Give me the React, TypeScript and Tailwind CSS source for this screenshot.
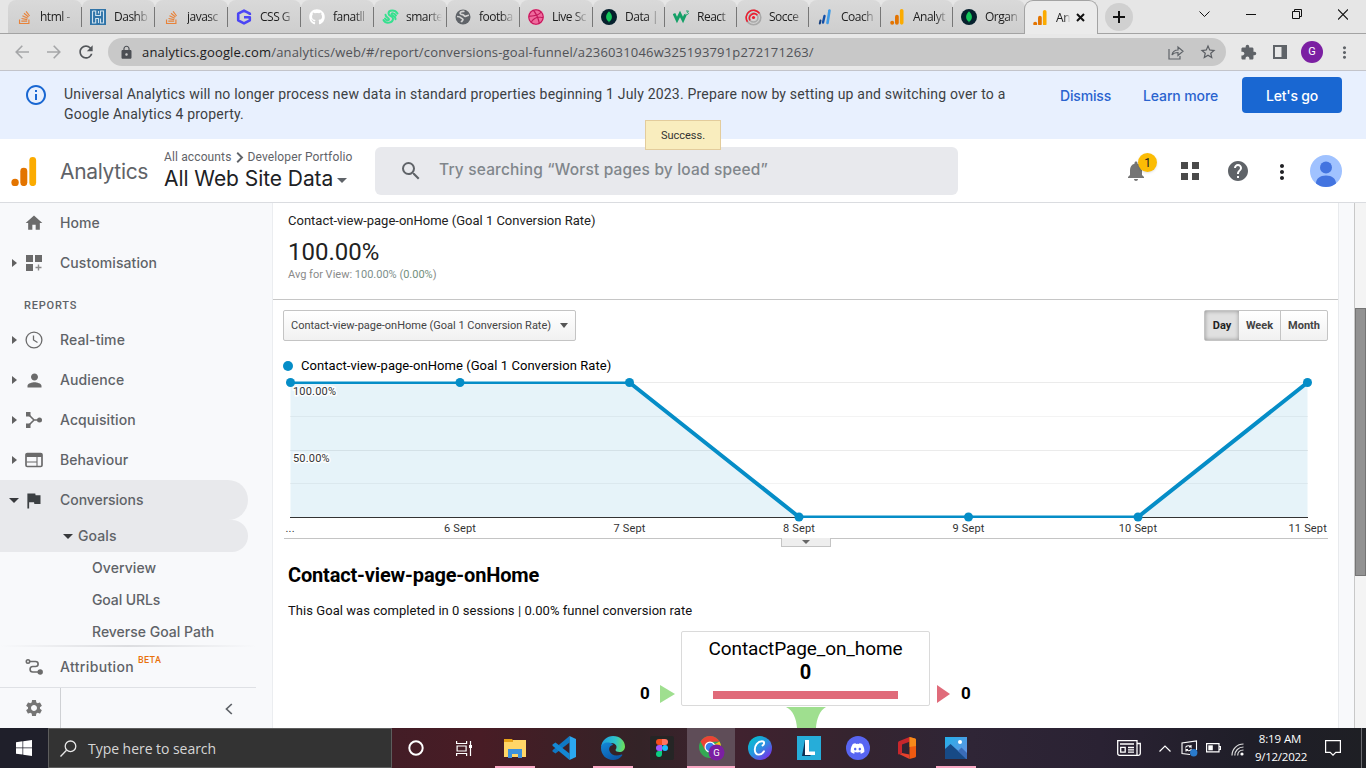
import React from 'react';
import {
  MdHome, MdPerson, MdSettings, MdHelp, MdSearch,
  MdMoreVert, MdLock, MdRefresh, MdExtension, MdOutlineInfo, MdStarBorder,
} from 'react-icons/md';
import { FaStackOverflow, FaGithub, FaDribbble, FaDiscord } from 'react-icons/fa';

/* ---------- favicons ---------- */

const StackIcon = () => <FaStackOverflow size={15} color="#e8833a" />;

const AnalyticsIcon = ({ size = 14 }: { size?: number }) => (
  <svg width={size} height={size * 1.12} viewBox="0 0 26 30">
    <rect x="18.5" y="0" width="7" height="30" rx="3.5" fill="#fbab00" />
    <rect x="9.2" y="11" width="7.2" height="19" rx="3.6" fill="#e37400" />
    <circle cx="3.8" cy="26.2" r="3.8" fill="#e37400" />
  </svg>
);

const HarvestIcon = () => (
  <svg width="16" height="16" viewBox="0 0 16 16">
    <rect width="16" height="16" fill="#3074a8" />
    <path d="M2.500 2v12h3.200V9.500h2.800V14M2.500 2h3.200v4.500h4.800V2h3v12h-3V9.500M8.500 2v2.500" fill="none" stroke="#d0e1ee" strokeWidth="1.100" />
  </svg>
);

const HexIcon = () => (
  <svg width="16" height="16" viewBox="0 0 16 16" fill="none" stroke="#4b45f5" strokeWidth="2.600" strokeLinejoin="round">
    <path d="M13.800 6V4.700L8 1.600 2.200 4.700v6.600L8 14.400l5.800-3.100V8.200H8" />
  </svg>
);

const SmartIcon = () => (
  <svg width="17" height="16" viewBox="0 0 17 16" fill="none" stroke="#35e08f" strokeWidth="2" strokeLinecap="round">
    <path d="M15.500 4.500C13 .5 6.500.8 6.500 4.500c0 3 4.500 2 4.500 5 0 4.500-7 6-9.500 1.500" />
    <path d="M14 6.500c-1.500-2.500-4.500-2.700-4.500-1.300 0 1.500 4.500 2 4 5M3 9.500c1.500 2.500 4 2 4 .8 0-1.300-3.500-2-3.500-4.500" />
  </svg>
);

const GlobeIcon = () => (
  <svg width="16" height="16" viewBox="0 0 16 16">
    <circle cx="8" cy="8" r="7.500" fill="#5f6368" />
    <path d="M9.500 2.200c-1.500.4-3.700 0-4.300 1.500-.4 1.300 1 1.900 2.300 1.900s1.400 1.700 2.800 1.700S12.600 6 14 6.300M2 7.500c1.400 0 3.200.2 3.900 1.300.7 1 1.900.6 2 1.900.1 1-1.200 1.300-1.600 2.500" fill="none" stroke="#d2d2d2" strokeWidth="1.700" />
  </svg>
);

const MongoIcon = () => (
  <svg width="16" height="16" viewBox="0 0 16 16">
    <circle cx="8" cy="8" r="8" fill="#06202d" />
    <path d="M8 2.200C5.600 4.800 5.100 6.300 5.100 8c0 2 1.200 3.500 2.500 4.500L8 14l.4-1.500C9.800 11.500 10.900 10 10.900 8c0-1.700-.5-3.200-2.900-5.800z" fill="#13c65a" />
  </svg>
);

const W3Icon = () => (
  <svg width="17" height="14" viewBox="0 0 17 14" fill="none" stroke="#14a067">
    <path d="M1 3.500l3 6.500 3-6 3 6 2.500-5.500" strokeWidth="2.800" />
    <path d="M13 1h2.500l-1.200 1.500c1.500 0 1.500 2-.2 2-.6 0-1-.2-1.300-.6" strokeWidth=".9" />
  </svg>
);

const RadarIcon = () => (
  <svg width="17" height="17" viewBox="0 0 17 17" fill="none" strokeWidth="1.600">
    <circle cx="8.500" cy="8.500" r="7.300" stroke="#a9a9a9" />
    <circle cx="8.500" cy="8.500" r="4.500" stroke="#a9a9a9" />
    <path d="M2.500 12.800A7.300 7.300 0 0 1 14.500 4.400M5 11.300A4.500 4.500 0 0 1 12.300 6.200" stroke="#ee1c2e" />
    <circle cx="8.500" cy="8.500" r="1.600" fill="#ee1c2e" stroke="none" />
  </svg>
);

const CoachIcon = () => (
  <svg width="14" height="17" viewBox="0 0 14 17" fill="none" strokeLinecap="round">
    <path d="M11.500 1.500L9.500 14" stroke="#3f9be6" strokeWidth="2.600" />
    <path d="M6.500 7L5 13.500" stroke="#1450a8" strokeWidth="2.400" />
    <path d="M2.500 11.500l-.7 3" stroke="#17407e" strokeWidth="2" />
  </svg>
);

/* ---------- browser chrome ---------- */

type TabInfo = { label: string; icon: React.ReactNode; w: string };

const tabs: TabInfo[] = [
  { label: 'html -', icon: <StackIcon />, w: 'w-[74px]' },
  { label: 'Dashb', icon: <HarvestIcon />, w: 'w-[73px]' },
  { label: 'javasc', icon: <StackIcon />, w: 'w-[73px]' },
  { label: 'CSS G', icon: <HexIcon />, w: 'w-[73px]' },
  { label: 'fanatll', icon: <FaGithub size={16} color="#fff" />, w: 'w-[73px]' },
  { label: 'smarte', icon: <SmartIcon />, w: 'w-[73px]' },
  { label: 'footba', icon: <GlobeIcon />, w: 'w-[73px]' },
  { label: 'Live Sc', icon: <FaDribbble size={16} color="#c2185b" className="rounded-full bg-[#f06a9d]" />, w: 'w-[73px]' },
  { label: 'Data |', icon: <MongoIcon />, w: 'w-[72px]' },
  { label: 'React', icon: <W3Icon />, w: 'w-[72px]' },
  { label: 'Socce', icon: <RadarIcon />, w: 'w-[72px]' },
  { label: 'Coach', icon: <CoachIcon />, w: 'w-[72px]' },
  { label: 'Analyt', icon: <AnalyticsIcon />, w: 'w-[72px]' },
  { label: 'Organ', icon: <MongoIcon />, w: 'w-[72px]' },
];

function TabStrip() {
  return (
    <div className="flex h-[34px] border-b border-[#a3a3a3] bg-[#e6e6e6] pl-[8px]">
      {tabs.map((t, i) => (
        <div key={i} className={`${t.w} flex h-[33px] shrink-0 items-center rounded-t-[8px] bg-linear-to-b from-[#d9d9d9] to-[#cecece] pt-[1px]`}>
          <span className="ml-[7px] flex w-[18px] shrink-0 justify-center">{t.icon}</span>
          <span className="ml-[7px] w-[36px] shrink-0 whitespace-nowrap text-[12px] leading-[18px] tracking-[-0.5px] text-[#1c1c1c] [mask-image:linear-gradient(to_right,black_60%,transparent_100%)]">{t.label}</span>
          {i < tabs.length - 1 && <span className="ml-auto h-[20px] w-px bg-[#777]" />}
        </div>
      ))}
      <div className="-ml-[1px] flex h-[34px] w-[74px] shrink-0 items-center rounded-t-[9px] border border-b-0 border-[#a3a3a3] bg-[#ebebeb]">
        <span className="ml-[6px] flex w-[18px] justify-center"><AnalyticsIcon /></span>
        <span className="ml-[7px] w-[16px] whitespace-nowrap text-[12px] tracking-[-0.4px] text-[#1c1c1c] [mask-image:linear-gradient(to_right,black_50%,transparent_90%)]">An</span>
        <svg className="ml-[4px]" width="9" height="9" viewBox="0 0 9 9"><path d="M1 1l7 7M8 1L1 8" stroke="#111" strokeWidth="2" /></svg>
      </div>
      <div className="ml-[7px] mt-[3px] flex h-[28px] w-[28px] items-center justify-center rounded-full bg-[#d0d0d0]">
        <svg width="12" height="12" viewBox="0 0 12 12"><path d="M6 0v12M0 6h12" stroke="#111" strokeWidth="2" /></svg>
      </div>
      <div className="ml-auto flex items-start pt-[8px]">
        <svg className="mr-[36px] mt-[3px]" width="11" height="7" viewBox="0 0 11 7"><path d="M.5.5l5 5 5-5" fill="none" stroke="#111" /></svg>
        <svg className="mr-[36px] mt-[6px]" width="10" height="1"><rect width="10" height="1" fill="#111" /></svg>
        <svg className="mr-[36px] mt-[1px]" width="10" height="10" viewBox="0 0 10 10" fill="none" stroke="#111"><path d="M.5 2.500h7v7h-7zM2.500 2.500v-2h7v7h-2" /></svg>
        <svg className="mr-[18px] mt-[1px]" width="10" height="11" viewBox="0 0 10 10"><path d="M0 0l10 10M10 0L0 10" stroke="#111" strokeWidth="1.100" /></svg>
      </div>
    </div>
  );
}

function Toolbar() {
  return (
    <div className="flex h-[37px] items-center border-b border-[#c3c4ca] bg-[#e8e8e8]">
      <svg className="ml-[15px]" width="14" height="14" viewBox="0 0 14 14" fill="none" stroke="#a5a6a8" strokeWidth="1.600"><path d="M14 7H1.500M7.300 .8L1.200 7l6.100 6.200" /></svg>
      <svg className="ml-[18px]" width="14" height="14" viewBox="0 0 14 14" fill="none" stroke="#a5a6a8" strokeWidth="1.600"><path d="M0 7h12.500M6.700 .8L12.800 7l-6.100 6.200" /></svg>
      <MdRefresh className="ml-[15px]" size={20} color="#53565a" />
      <div className="ml-[12px] flex h-[28px] w-[1118px] items-center rounded-full bg-[#c8c8c8]">
        <MdLock className="ml-[11px]" size={15} color="#4c4f54" />
        <span className="ml-[8px] whitespace-nowrap pt-px text-[13px] tracking-[0.17px] text-[#505257]">
          <span className="text-[#1b1b1c]">analytics.google.com</span>/analytics/web/#/report/conversions-goal-funnel/a236031046w325193791p272171263/
        </span>
        <svg className="ml-auto" width="16" height="15" viewBox="0 0 16 15" fill="none" stroke="#5f6368" strokeWidth="1.200">
          <path d="M1 4v10h11v-3M4 10c.5-3 2.500-5 6-5V2l5 4.200-5 4.200V7.500C7.500 7.500 5.500 8 4 10z" />
        </svg>
        <MdStarBorder className="ml-[15px] mr-[9px]" size={18} color="#5a5d62" />
      </div>
      <MdExtension className="ml-[14px]" size={17} color="#5f6368" />
      <svg className="ml-[16px]" width="14" height="14" viewBox="0 0 14 14"><path d="M1 1h12v12H1z" fill="none" stroke="#5f6368" strokeWidth="2" /><rect x="8.500" y="1" width="5" height="12" fill="#5f6368" /></svg>
      <span className="ml-[14px] flex h-[22px] w-[22px] items-center justify-center rounded-full bg-[#7b1fa2] font-['Roboto'] text-[11px] text-white">G</span>
      <MdMoreVert className="ml-[12px]" size={19} color="#5f6368" />
    </div>
  );
}

/* ---------- analytics header ---------- */

function Banner() {
  return (
    <div className="relative flex h-[68px] shrink-0 bg-[#e8f0fe] font-['Roboto'] text-[#3c4043]">
      <MdOutlineInfo className="ml-[24px] mt-[12px]" size={24} color="#1967d2" />
      <p className="ml-[16px] mt-[13px] w-[960px] text-[14px] leading-[20px] tracking-[0.195px]">
        Universal Analytics will no longer process new data in standard properties beginning 1 July 2023. Prepare now by setting up and switching over to a
        <br />Google Analytics 4 property.
      </p>
      <div className="ml-[36px] mt-[6px] flex h-[36px] w-[282px] items-center self-start font-['Inter'] text-[14px] font-medium text-[#2a63cf]">
        <span className="tracking-[-0.17px]">Dismiss</span>
        <span className="ml-[32px] whitespace-nowrap tracking-[-0.12px]">Learn more</span>
        <span className="ml-auto flex h-[36px] w-[100px] items-center justify-center rounded-[4px] bg-[#1967d2] tracking-[-0.2px] text-white">Let's go</span>
      </div>
      <div className="absolute left-[645px] top-[49px] z-10 flex h-[30px] w-[76px] items-center justify-center border border-[#e3cc9c] bg-[#f9edbe] pt-[2px] text-[11px] text-[#333]">Success.</div>
    </div>
  );
}

function Header() {
  return (
    <header className="flex h-[64px] shrink-0 border-b border-[#dadce0] bg-white">
      <span className="ml-[11px] mt-[18px]"><AnalyticsIcon size={26} /></span>
      <span className="ml-[23px] mt-[17px] w-[104px] font-['Inter'] text-[21px] leading-[32px] tracking-[-0.33px] text-[#5f6368]">Analytics</span>
      <div className="mt-[10px] w-[211px]">
        <div className="flex h-[16px] items-center whitespace-nowrap font-['Roboto'] text-[12px] tracking-[0.13px] text-[#5f6368]">
          All accounts<svg className="mx-[4px]" width="8" height="11" viewBox="0 0 8 11"><path d="M1.200 .8L6 5.500 1.200 10.200" fill="none" stroke="#5f6368" strokeWidth="1.900" /></svg>Developer Portfolio
        </div>
        <div className="flex h-[28px] items-center whitespace-nowrap font-['Inter'] text-[21px] tracking-[-0.06px] text-[#202124]">
          All Web Site Data<span className="ml-[4px] mt-[2px] border-x-[5px] border-t-[5px] border-x-transparent border-t-[#5f6368]" />
        </div>
      </div>
      <div className="mt-[8px] flex h-[48px] w-[583px] items-center rounded-[6px] bg-[#e8e9ed]">
        <MdSearch className="ml-[24px]" size={24} color="#5f6368" />
        <span className="mb-[3px] ml-[16px] font-['Inter'] text-[15.500px] font-medium tracking-[0.17px] text-[#80868b]">Try searching “Worst pages by load speed”</span>
      </div>
      <div className="ml-auto flex h-[64px] items-center">
        <span className="relative mr-[32px]">
          <svg width="24" height="24" viewBox="0 0 24 24" fill="#757575"><path d="M12 22c1.100 0 2-.9 2-2h-4c0 1.100.9 2 2 2zm6-6v-5c0-3.070-1.630-5.640-4.500-6.320V4c0-.83-.67-1.500-1.500-1.500s-1.500.67-1.500 1.500v.68C7.640 5.360 6 7.920 6 11v5l-2 2v1h16v-1l-2-2z" /></svg>
          <span className="absolute left-[14px] top-[-6px] flex h-[19px] w-[19px] items-center justify-center rounded-full bg-[#fbbc04] font-['Roboto'] text-[12px] text-[#202124] shadow">1</span>
        </span>
        <svg className="mr-[26px]" width="20" height="20" viewBox="0 0 20 20" fill="#4a4a4a"><path d="M1 1h7v7H1zM12 1h7v7h-7zM1 12h7v7H1zM12 12h7v7h-7z" /></svg>
        <MdHelp size={24} color="#5f6368" className="mr-[20px]" />
        <MdMoreVert size={24} color="#202124" className="mr-[16px] mt-[2px]" />
        <svg className="mr-[24px]" width="32" height="32" viewBox="0 0 32 32">
          <circle cx="16" cy="16" r="16" fill="#a0c2ff" />
          <circle cx="16" cy="12.500" r="6" fill="#4374e0" />
          <path d="M6 28.500c0-5 4-8 10-8s10 3 10 8A16 16 0 0 1 16 32 16 16 0 0 1 6 28.500z" fill="#4374e0" />
        </svg>
      </div>
    </header>
  );
}

/* ---------- side navigation ---------- */

const CustomiseIcon = () => (
  <svg width="16" height="16" viewBox="0 0 16 16" fill="#6b6b6b"><path d="M0 0h7v7H0zM9 0h7v7H9zM0 9h7v7H0z" /><path d="M12.500 9.500v6M9.500 12.500h6" stroke="#8a8a8a" strokeWidth="1.400" /></svg>
);
const FlagIcon = () => (
  <svg className="ml-[4px]" width="21" height="21" viewBox="0 0 24 24" fill="#3c4043"><path d="M14.400 6L14 4H5v17h2v-7h5.600l.4 2h7V6z" /></svg>
);
const ClockIcon = () => (
  <svg width="18" height="18" viewBox="0 0 18 18" fill="none" stroke="#6b6b6b" strokeWidth="1.300"><circle cx="9" cy="9" r="7.900" /><path d="M8.500 4.500V9l4 2.500" /></svg>
);
const AcquisitionIcon = () => (
  <svg width="18" height="18" viewBox="0 0 18 18" fill="#6b6b6b"><path d="M1 1h4.500v4.500H1zM1 12.500h4.500V17H1z" /><circle cx="14.500" cy="9" r="2.500" /><path d="M3.500 3.500L9 9l-5.500 5.500M9 9h5" stroke="#6b6b6b" strokeWidth="1.600" fill="none" /></svg>
);
const AttributionIcon = () => (
  <svg width="18" height="18" viewBox="0 0 18 18" fill="none" stroke="#6b6b6b" strokeWidth="1.600"><circle cx="3" cy="3.500" r="1.700" /><path d="M4.800 3.500h5.700c3.500 0 3.500 5 0 5H7.700c-3.500 0-3.500 5.500 0 5.500H13" /><circle cx="15.200" cy="14" r="1.900" fill="#6b6b6b" /></svg>
);
const BehaviourIcon = () => (
  <svg width="18" height="16" viewBox="0 0 18 16" fill="none" stroke="#6b6b6b"><rect x="1" y="1.500" width="16" height="13" rx="1.300" strokeWidth="1.700" /><path d="M1 3.300h16" strokeWidth="3.400" /><path d="M1.500 10h10M12 5v9.500" strokeWidth="1.100" /></svg>
);

function NavItem({ label, icon, arrow = 'right' }: { label: string; icon: React.ReactNode; arrow?: 'right' | 'none' }) {
  return (
    <div className="flex h-[40px] shrink-0 items-center">
      <span className="flex w-[24px] pl-[12px]">
        {arrow === 'right' && <span className="border-y-[4px] border-l-[5px] border-y-transparent border-l-[#616161]" />}
      </span>
      <span className="flex w-[20px] justify-center">{icon}</span>
      <span className="ml-[16px] pb-[2px]">{label}</span>
    </div>
  );
}

function Sidebar() {
  return (
    <nav className="flex w-[273px] shrink-0 flex-col border-r border-[#ebedf0] bg-[#f8f9fb] font-['Inter'] text-[14px] font-medium tracking-[0.09px] text-[#5f6368]">
      <NavItem label="Home" icon={<MdHome size={20} color="#6b6b6b" />} arrow="none" />
      <NavItem label="Customisation" icon={<CustomiseIcon />} />
      <div className="flex h-[37px] shrink-0 items-center pl-[24px] pt-[9px] font-['Roboto'] text-[11px] tracking-[0.8px]">REPORTS</div>
      <NavItem label="Real-time" icon={<ClockIcon />} />
      <NavItem label="Audience" icon={<MdPerson size={21} className="shrink-0" color="#6b6b6b" />} />
      <NavItem label="Acquisition" icon={<AcquisitionIcon />} />
      <NavItem label="Behaviour" icon={<BehaviourIcon />} />
      <div className="flex h-[40px] w-[248px] shrink-0 items-center rounded-r-full bg-[#e8e9ec] pl-[9px]">
        <span className="border-x-[5px] border-t-[5px] border-x-transparent border-t-[#37393c]" />
        <FlagIcon />
        <span className="ml-[16px] pb-[2px] tracking-[-0.04px]">Conversions</span>
      </div>
      <div className="flex h-[32px] w-[248px] shrink-0 items-center rounded-r-full bg-[#e8e9ec] pl-[63px]">
        <span className="border-x-[5px] border-t-[5px] border-x-transparent border-t-[#37393c]" />
        <span className="ml-[5px] pb-[2px]">Goals</span>
      </div>
      <div className="flex h-[32px] shrink-0 items-center pb-[2px] pl-[92px]">Overview</div>
      <div className="flex h-[32px] shrink-0 items-center pb-[2px] pl-[92px] tracking-[-0.1px]">Goal URLs</div>
      <div className="flex h-[29px] shrink-0 items-center pl-[92px] pt-[1px] tracking-[0px]">Reverse Goal Path</div>
      <div className="h-[2px] w-[256px] shrink-0 bg-linear-to-r from-transparent via-[#dcdde0] to-transparent" />
      <div className="flex h-[41px] w-[256px] shrink-0 items-center border-b border-[#dfe1e5]">
        <span className="ml-[24px] flex w-[20px] justify-center"><AttributionIcon /></span>
        <span className="ml-[16px] pb-px tracking-[0.35px]">Attribution</span>
        <span className="mb-[12px] ml-[4px] font-['Roboto'] text-[9px] tracking-[0.35px] text-[#e8710a]">BETA</span>
      </div>
      <div className="flex h-[40px] shrink-0 items-center">
        <span className="flex h-full w-[61px] items-center border-r border-[#cfd1d4] pl-[24px]"><MdSettings size={20} color="#757575" /></span>
        <svg className="ml-[164px] mt-px" width="8" height="12" viewBox="0 0 8 12"><path d="M6.800 1L1.500 6l5.300 5" fill="none" stroke="#5f6368" strokeWidth="1.700" /></svg>
      </div>
    </nav>
  );
}

/* ---------- report ---------- */

const xs = [7.5, 177, 346.5, 516, 685.5, 855, 1024.5];
const values = [100, 100, 100, 0, 0, 0, 100];
const pts = xs.map((x, i) => [x, values[i] ? 7.5 : 142]);
const line = pts.map(p => p.join(',')).join(' ');
const dayLabels = ['6 Sept', '7 Sept', '8 Sept', '9 Sept', '10 Sept'];

function Chart() {
  return (
    <svg className="block" width="1045" height="163" viewBox="0 0 1045 163">
      <g stroke="#ebebeb"><path d="M7 7.500h1018M7 75.500h1018" /><path d="M7 41.500h1018M7 108.500h1018" stroke="#f3f3f3" /></g>
      <polygon points={`7.5,142 ${line} 1024.5,142`} fill="#058dc7" fillOpacity=".1" />
      <path d="M7 142.500h1018" stroke="#333" />
      <g stroke="#058dc7">
        <path d="M7.500 7.700H346.500M516 141.700H855" strokeWidth="2.600" />
        <path d="M346.500 7.500L516 142M855 142L1024.500 7.500" strokeWidth="4" />
      </g>
      {pts.map(([x, y], i) => <circle key={i} cx={x} cy={y} r="4.500" fill="#058dc7" />)}
      <g fontFamily="Roboto" fontSize="11" fill="#333" letterSpacing=".18">
        <g stroke="#fff" strokeWidth="3" paintOrder="stroke" strokeOpacity=".85">
          <text x="10" y="20">100.00%</text>
          <text x="10" y="87">50.00%</text>
        </g>
        <text x="2.500" y="157">...</text>
        {dayLabels.map((d, i) => <text key={d} x={xs[i + 1]} y="157" textAnchor="middle">{d}</text>)}
        <text x="1044" y="157" textAnchor="end">11 Sept</text>
      </g>
    </svg>
  );
}

function Funnel() {
  return (
    <div className="mt-[10px] flex h-[97px] pl-[367px] font-['Roboto'] text-black">
      <span className="mt-[51px] w-[13px] text-[17px] font-bold leading-[22px]">0</span>
      <svg className="ml-[7px] mt-[54px]" width="15" height="18"><path d="M0 0l15 9-15 9z" fill="#9fdf8f" /></svg>
      <div className="ml-[6px] w-[249px]">
        <div className="flex h-[75px] flex-col items-center rounded-[2px] border border-[#dadada]">
          <span className="mt-[5px] text-[19px] leading-[24px] tracking-[-0.1px]">ContactPage_on_home</span>
          <span className="text-[20px] font-bold leading-[22px]">0</span>
          <span className="mt-[8px] h-[8px] w-[185px] bg-[#e06b7a]" />
        </div>
        <svg className="ml-[105px] mt-px block" width="40" height="21"><path d="M0 0h40C34 3 30.500 12 30 21H11C10.500 12 7 3 0 0z" fill="#9fdf8f" /></svg>
      </div>
      <svg className="ml-[7px] mt-[54px]" width="13" height="18"><path d="M0 0l13 9-13 9z" fill="#e06b7a" /></svg>
      <span className="ml-[11px] mt-[51px] text-[17px] font-bold leading-[22px]">0</span>
    </div>
  );
}

function Report() {
  return (
    <main className="w-[1065px] shrink-0 bg-white font-['Roboto'] text-[13px]">
      <section className="h-[97px] border-b border-[#c6c6c6] pl-[15px] pt-[9px]">
        <div className="leading-[18px] text-[#222]">Contact-view-page-onHome (Goal 1 Conversion Rate)</div>
        <div className="mt-[7px] text-[24px] leading-[30px] text-[#222]">100.00%</div>
        <div className="mt-px text-[11px] leading-[14px] text-[#8a8a8a]">Avg for View: <span className="text-[#7d8f8c]">100.00% (</span><span className="text-[#73907c]">0.00%</span>)</div>
      </section>
      <div className="mt-[10px] flex h-[31px] justify-between px-[10px] text-[11px]">
        <div className="flex w-[293px] items-center justify-between rounded-[2px] border border-[#c4c4c4] bg-linear-to-b from-white to-[#f1f1f1] px-[7px] text-[#444]">
          <span className="pt-px">Contact-view-page-onHome (Goal 1 Conversion Rate)</span>
          <span className="border-x-[4px] border-t-[5px] border-x-transparent border-t-[#555]" />
        </div>
        <div className="flex rounded-[2px] border border-[#c4c4c4] bg-linear-to-b from-white to-[#f1f1f1] font-bold text-[#444]">
          <span className="flex w-[34px] items-center justify-center bg-[#e0e0e0] pt-px text-[#222] shadow-[inset_0_0_4px_rgba(0,0,0,0.35)]">Day</span>
          <span className="flex w-[42px] items-center justify-center border-r border-[#c4c4c4] pt-px">Week</span>
          <span className="flex w-[46px] items-center justify-center pt-px">Month</span>
        </div>
      </div>
      <div className="flex h-[34px] items-center pl-[10px] pt-[15px] tracking-[0.06px] text-black">
        <span className="mr-[8px] h-[10px] w-[10px] rounded-full bg-[#058dc7]" />Contact-view-page-onHome (Goal 1 Conversion Rate)
      </div>
      <div className="ml-[10px]"><Chart /></div>
      <div className="ml-[11px] flex h-[10px] w-[1044px] justify-center border-t border-[#c4c4c4]">
        <div className="-mt-px flex h-[9px] w-[50px] items-center justify-center border border-t-0 border-[#c4c4c4] bg-[#eee]">
          <span className="border-x-[4px] border-t-[4px] border-x-transparent border-t-[#666]" />
        </div>
      </div>
      <h2 className="ml-[15px] mt-[15px] text-[20px] font-bold leading-[24px] tracking-[-0.16px] text-black">Contact-view-page-onHome</h2>
      <p className="ml-[15px] mt-[14px] leading-[20px] tracking-[0.05px] text-[#111]">This Goal was completed in 0 sessions | 0.00% funnel conversion rate</p>
      <Funnel />
    </main>
  );
}

/* ---------- taskbar ---------- */

const VsCode = () => (
  <svg width="24" height="24" viewBox="0 0 24 24"><path d="M17.500 0v6.500L3.500 17.500 .5 15.500v-1.200L17.500 0z" fill="#0f78c4" /><path d="M.5 8.500l3-2L17.500 17.500v6.500L.5 9.700z" fill="#1488d4" /><path d="M17.500 0L24 3v18l-6.500 3z" fill="#2ba7f0" /></svg>
);
const Edge = () => (
  <svg width="24" height="24" viewBox="0 0 24 24">
    <defs>
      <linearGradient id="eg" x1="0" x2="1" y1=".3" y2=".4"><stop stopColor="#1c9de0" /><stop offset=".6" stopColor="#2fc4c9" /><stop offset="1" stopColor="#6be05a" /></linearGradient>
      <linearGradient id="eb" x1="0" x2=".6" y1="0" y2="1"><stop stopColor="#1389d8" /><stop offset="1" stopColor="#0c57a8" /></linearGradient>
    </defs>
    <path d="M0 11C1 4 6 0 12 0c7 0 12 5 12 10.500 0 3.500-2.500 5.500-5.500 5.500-2.500 0-4-1-4-2 0-.8 1-1 1-3C15.500 8.500 13 7 9.500 7 4.500 7 1 9.500 0 11z" fill="url(#eg)" />
    <path d="M0 12c0-4 4-6 8-5.500C11 7 12 8.500 12 9c-3 .5-4.500 3-3.500 6 1.200 3.800 6 6 12 3.500.8 0 1 .5.500 1.200C19 22.500 15.500 24 12 24 5.500 24 0 19 0 12z" fill="url(#eb)" />
  </svg>
);
const Figma = () => (
  <svg width="24" height="24" viewBox="0 0 24 24"><rect width="24" height="24" rx="2" fill="#252525" />
    <path d="M12 3H9a3 3 0 0 0 0 6h3z" fill="#f24e1e" /><path d="M12 3h3a3 3 0 0 1 0 6h-3z" fill="#ff7262" /><path d="M12 9H9a3 3 0 0 0 0 6h3z" fill="#a259ff" /><circle cx="15" cy="12" r="3" fill="#1abcfe" /><path d="M12 15H9a3 3 0 1 0 3 3z" fill="#0acf83" /></svg>
);
const Chrome = () => (
  <svg className="ml-[5px]" width="28" height="26" viewBox="0 0 28 26">
    <circle cx="11" cy="12" r="11" fill="#34a853" />
    <path d="M11 12l9.500-5.500A11 11 0 0 1 11 23z" fill="#fbc116" />
    <path d="M1.500 6.500A11 11 0 0 1 20.500 6.500L11 7l-5 8z" fill="#ea4335" />
    <circle cx="11" cy="12" r="5.500" fill="#fff" /><circle cx="11" cy="12" r="4.300" fill="#3b7ded" />
    <circle cx="17.500" cy="17.500" r="8" fill="#7b1fa2" />
    <text x="17.500" y="21" textAnchor="middle" fontFamily="Roboto" fontSize="9.500" fill="#fff">G</text>
  </svg>
);
const Canva = () => (
  <svg width="24" height="24" viewBox="0 0 24 24">
    <defs><linearGradient id="cv" x1="0" y1=".1" x2=".8" y2="1"><stop stopColor="#00c4cc" /><stop offset=".5" stopColor="#2795e0" /><stop offset="1" stopColor="#7d2ae8" /></linearGradient></defs>
    <circle cx="12" cy="12" r="12" fill="url(#cv)" />
    <path d="M14.500 9.500c2-.8 2.500-4.300-.5-4.300C9.700 5.200 6.800 9.500 6.800 13.500c0 3.200 1.700 5.100 4.100 5.100 2.300 0 4.100-1.700 5.100-3.400" fill="none" stroke="#fff" strokeWidth="1.900" strokeLinecap="round" />
  </svg>
);
const LApp = () => (
  <svg width="24" height="24" viewBox="0 0 24 24"><rect width="24" height="24" fill="#26add9" /><path d="M8 4L5 20h9l-3-3z" fill="#0d2f52" /><path d="M8 4h4v11.500h6V19H8z" fill="#fff" /></svg>
);
const Office = () => (
  <svg width="18" height="22" viewBox="0 0 18 22">
    <path d="M11.500 0L1.500 4C.6 4.400 0 5 0 6v10.500c0 .8 1 1.200 1.600.8L4 16V7.500l7.500-2.800z" fill="#c9262c" />
    <path d="M4 16l-2.400 1.300L11.500 22v-4.500z" fill="#e8402c" />
    <path d="M11.500 0L17 1.500c.6.200 1 .7 1 1.300v16.400c0 .6-.4 1.100-1 1.300L11.500 22z" fill="#ee5a10" />
    <path d="M11.500 0L17 1.500c.6.200 1 .7 1 1.300V9l-6.500 1z" fill="#f78a1a" />
  </svg>
);
const Photos = () => (
  <svg width="22" height="22" viewBox="0 0 22 22"><defs><linearGradient id="ph" x1="0" x2="1" y1="0" y2="1"><stop stopColor="#22b0ea" /><stop offset="1" stopColor="#6d8fe0" /></linearGradient></defs>
    <rect width="22" height="22" fill="url(#ph)" /><circle cx="15" cy="5" r="2" fill="#fff" /><path d="M0 12l5.500-5L22 22H0z" fill="#174a86" /><path d="M13 14l3.500-3.500L22 16v6h-1z" fill="#3a6cb8" /></svg>
);
const Explorer = () => (
  <svg width="22" height="19" viewBox="0 0 22 19"><path d="M0 0h8l1.500 2H22v4H0z" fill="#e8a317" /><rect x="9" y="1" width="13" height="4" fill="#ffd667" /><rect y="3" width="22" height="15" fill="#ffd667" /><path d="M4 19v-9h14v9h-4v-4H8v4z" fill="#3d92dc" /></svg>
);

const apps: { icon: React.ReactNode; bar?: string; active?: boolean }[] = [
  { icon: <Explorer />, bar: 'w-[40px]' }, { icon: <VsCode /> }, { icon: <Edge />, bar: 'w-[40px]' }, { icon: <Figma /> },
  { icon: <Chrome />, bar: 'w-[48px]', active: true }, { icon: <Canva /> }, { icon: <LApp /> },
  { icon: <span className="flex h-[24px] w-[24px] items-center justify-center rounded-full bg-[#5865f2]"><FaDiscord size={15} color="#fff" /></span> },
  { icon: <Office /> }, { icon: <Photos />, bar: 'w-[40px]' },
];

function Taskbar() {
  return (
    <footer className="flex h-[40px] shrink-0 items-center bg-[linear-gradient(to_right,#1f1f2a_0px,#1f1f2a_48px,#431d26_392px,#481c25_480px,#332327_640px,#40222f_740px,#35242f_850px,#2f2536_970px,#2a2233_1100px,#1f1e28_1250px,#1e1f24_1366px)] text-white">
      <span className="flex w-[48px] justify-center">
        <svg width="16" height="16" viewBox="0 0 16 16" fill="#fff"><path d="M0 2.200l6.500-.9v6.300H0zM7.200 1.200L16 0v7.600H7.200zM0 8.300h6.500v6.300L0 13.700zM7.200 8.300H16V16l-8.800-1.200z" /></svg>
      </span>
      <div className="flex h-[40px] w-[344px] items-center border border-[#5d5d5d] bg-[#333]">
        <svg className="ml-[11px]" width="17" height="17" viewBox="0 0 17 17" fill="none" stroke="#e8e8e8" strokeWidth="1.300"><circle cx="10.500" cy="6.300" r="5.300" /><path d="M6.500 10.200L.5 16.500" /></svg>
        <span className="ml-[11px] text-[14px] tracking-[-0.04px] text-[#d6d6d6]">Type here to search</span>
      </div>
      <span className="flex w-[48px] justify-center"><svg width="16" height="16"><circle cx="8" cy="8" r="6.700" fill="none" stroke="#fff" strokeWidth="2" /></svg></span>
      <span className="mr-[2px] flex w-[48px] justify-center">
        <svg width="16" height="15" viewBox="0 0 16 15" fill="none" stroke="#fff" strokeWidth="1.200"><path d="M.6 0v2.500h10V0M.6 15v-2.500h10V15M1.100 5h9v5h-9zM14.500 0v15" /><rect x="13" y="4" width="3" height="3" fill="#fff" stroke="none" /></svg>
      </span>
      {apps.map((a, i) => (
        <span key={i} className="flex w-[49px] justify-center">
          <span className={`flex h-[40px] w-[48px] flex-col items-center ${a.active ? 'bg-[#5f4d58]' : ''}`}>
            <span className="flex h-[38px] items-center pt-[2px]">{a.icon}</span>
            {a.bar && <span className={`h-[2px] bg-[#f9a8c4] ${a.bar}`} />}
          </span>
        </span>
      ))}
      <div className="ml-auto flex h-full items-center">
        <svg className="mr-[18px]" width="24" height="16" viewBox="0 0 24 16" fill="none" stroke="#fff" strokeWidth="1.300"><path d="M20 15.300H2.500A1.800 1.800 0 0 1 .7 13.500V.7H20v14.600zM20 3.500h3.300v10c0 1-.8 1.800-1.800 1.800H20M3 4h14M11 7.500h6M11 9.800h6M11 12.200h6M3.700 7.300h4.500v4.800H3.700z" /></svg>
        <svg className="mr-[10px]" width="12" height="7" viewBox="0 0 12 7"><path d="M.5 6.500L6 1l5.500 5.500" fill="none" stroke="#fff" strokeWidth="1.200" /></svg>
        <svg className="mr-[8px]" width="17" height="17" viewBox="0 0 17 17" fill="none" stroke="#fff" strokeWidth="1.100"><path d="M9 14.500L1 13.500V3l14.500-2v9M4.500 7.500c1-2 4-2.300 5.500-.5V5M10.500 9c-1 2-4 2.300-5.500.5V11.500M10 7H8M5 9.500h2" /><circle cx="12.700" cy="12.700" r="3.700" fill="#2a7bcc" stroke="none" /></svg>
        <svg className="mr-[10px]" width="15" height="10" viewBox="0 0 15 10" fill="none" stroke="#fff" strokeWidth="1.200"><path d="M.6.6h12.400v8.200H.6zM13.500 3.500h1v3h-1" /><rect x="2.300" y="2.300" width="4.500" height="5" fill="#fff" stroke="none" /></svg>
        <svg className="mr-[10px] mt-[2px]" width="13" height="13" viewBox="0 0 13 13" fill="none" stroke="#ddd" strokeWidth="1.200"><path d="M1 12.500C1 6 6 1 12.500 1M3.800 12.500c0-4.800 3.700-8.500 8.700-8.500M6.700 12.500C6.700 9.300 9 7 12.500 7" /><circle cx="11" cy="11" r="1.600" fill="#fff" stroke="none" /></svg>
        <div className="mr-[17px] w-[54px] whitespace-nowrap text-center text-[11.500px] leading-[18px] tracking-[-0.1px]"><div className="pr-[2px]">8:19 AM</div><div className="tracking-[-0.25px]">9/12/2022</div></div>
        <svg className="mr-[20px]" width="16" height="16" viewBox="0 0 16 16" fill="none" stroke="#fff" strokeWidth="1.200"><path d="M.6.6h14.800v11.800h-4.600L8 15.200l-2.800-2.800H.6z" /></svg>
        <span className="mr-[4px] h-full w-px bg-[#6b6b70]" />
      </div>
    </footer>
  );
}

export default function App() {
  return (
    <div className="flex h-[768px] w-[1366px] flex-col overflow-hidden bg-white font-['Open_Sans',sans-serif]">
      <TabStrip />
      <Toolbar />
      <Banner />
      <Header />
      <div className="flex h-[525px] shrink-0 overflow-hidden bg-[#f8f9fb]">
        <Sidebar />
        <Report />
        <div className="w-[16px] border-l border-[#e8eaed]" />
        <div className="w-[12px] border-l border-[#c8c8c8] bg-[#f4f4f4] pt-[105px]">
          <div className="h-[268px] border border-[#757575] bg-[#929292]" />
        </div>
      </div>
      <Taskbar />
    </div>
  );
}
